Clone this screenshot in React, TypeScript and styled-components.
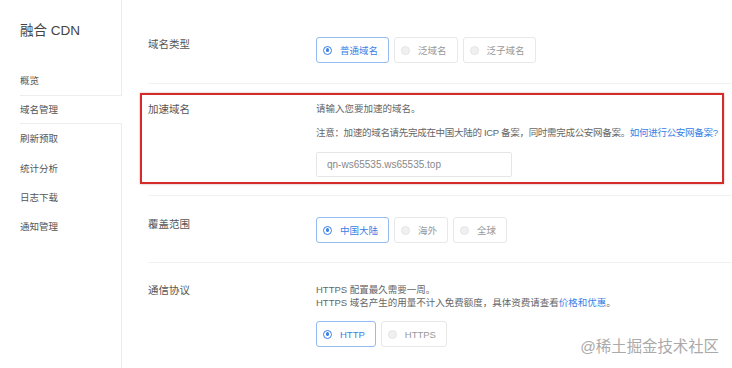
import React from "react";
import styled, { createGlobalStyle } from "styled-components";

const GlobalStyle = createGlobalStyle`
  body {
    margin: 0;
    background: #fff;
    font-family: "Liberation Sans", "Noto Sans CJK SC", sans-serif;
  }
`;

const Page = styled.div`
  position: relative;
  display: flex;
  width: 732px;
  height: 368px;
  overflow: hidden;
  background: #fff;
`;

const Sidebar = styled.aside`
  width: 121px;
  flex-shrink: 0;
  border-right: 1px solid #ececec;
  padding-top: 20px;
`;

const Title = styled.div`
  padding-left: 20px;
  font-size: 13.5px;
  line-height: 22px;
  color: #444;
`;

const Menu = styled.ul`
  list-style: none;
  margin: 24px 0 0;
  padding: 0;
`;

const MenuItem = styled.li<{ $active?: boolean }>`
  position: relative;
  margin-left: 20px;
  margin-right: ${(p) => (p.$active ? "-1px" : "0")};
  height: 29.2px;
  font-size: 9.5px;
  line-height: 27px;
  color: #555;
  background: #fff;
  box-sizing: border-box;
  border-top: 1px solid ${(p) => (p.$active ? "#eeeeee" : "transparent")};
  border-bottom: 1px solid ${(p) => (p.$active ? "#eeeeee" : "transparent")};
`;

const Main = styled.main`
  flex: 1;
  padding-left: 26px;
`;

const Section = styled.section<{ $pt: number; $pb: number; $last?: boolean }>`
  padding: ${(p) => `${p.$pt}px 0 ${p.$pb}px`};
  border-bottom: 1px solid ${(p) => (p.$last ? "transparent" : "#f1f1f1")};
`;

const Row = styled.div`
  display: grid;
  grid-template-columns: 168px 1fr;
  align-items: start;
`;

const Highlight = styled.div`
  margin: 0 8px 0 -8px;
  padding: 7px 0 5px 6px;
  border: 2px solid #d52b2b;
  box-shadow: 0 0 2px rgba(120, 0, 0, 0.35);
`;

const Label = styled.div`
  font-size: 10.5px;
  line-height: 14px;
  color: #555;
`;

const Text = styled.p<{ $lh?: number; $mt?: number; $tight?: boolean }>`
  margin: ${(p) => p.$mt ?? 0}px 0 0;
  font-size: 9.5px;
  line-height: ${(p) => p.$lh ?? 14}px;
  letter-spacing: ${(p) => (p.$tight ? "-0.3px" : "0")};
  color: #666;
  white-space: nowrap;
`;

const Link = styled.a`
  color: #3a80e6;
  text-decoration: none;
`;

const Input = styled.div`
  margin-top: 12px;
  width: 196px;
  height: 25px;
  box-sizing: border-box;
  border: 1px solid #e6e6e6;
  border-radius: 2px;
  padding-left: 10px;
  font-size: 10px;
  line-height: 23px;
  color: #888;
`;

const RadioGroup = styled.div<{ $mt?: number }>`
  display: flex;
  gap: 5px;
  margin-top: ${(p) => p.$mt ?? 0}px;
`;

const RadioButton = styled.div<{ $checked?: boolean }>`
  display: flex;
  align-items: center;
  gap: 8px;
  height: 26px;
  box-sizing: border-box;
  padding: 0 10px 0 6px;
  border: 1px solid ${(p) => (p.$checked ? "#95bcf0" : "#e8e8e8")};
  border-radius: 3px;
  font-size: 9.5px;
  color: ${(p) => (p.$checked ? "#3c80e4" : "#999")};
  background: #fff;
`;

const Dot = styled.span<{ $checked?: boolean }>`
  width: 9px;
  height: 9px;
  box-sizing: border-box;
  border-radius: 50%;
  border: 1px solid ${(p) => (p.$checked ? "#3c80e4" : "#e4e4e4")};
  background: ${(p) => (p.$checked ? "#fff" : "#f0f0f0")};
  display: flex;
  align-items: center;
  justify-content: center;

  &::after {
    content: "";
    width: 3.5px;
    height: 3.5px;
    border-radius: 50%;
    background: ${(p) => (p.$checked ? "#3c80e4" : "transparent")};
  }
`;

const Watermark = styled.div`
  position: absolute;
  right: 13px;
  bottom: 11px;
  font-size: 15.4px;
  line-height: 20px;
  color: #aaa;
`;

function Radios({ items, checked, mt }: { items: string[]; checked: number; mt?: number }) {
  return (
    <RadioGroup $mt={mt}>
      {items.map((it, i) => (
        <RadioButton key={it} $checked={i === checked}>
          <Dot $checked={i === checked} />
          {it}
        </RadioButton>
      ))}
    </RadioGroup>
  );
}

const menu = ["概览", "域名管理", "刷新预取", "统计分析", "日志下载", "通知管理"];

export default function App() {
  return (
    <Page>
      <GlobalStyle />
      <Sidebar>
        <Title>融合 CDN</Title>
        <Menu>
          {menu.map((m) => (
            <MenuItem key={m} $active={m === "域名管理"}>
              {m}
            </MenuItem>
          ))}
        </Menu>
      </Sidebar>
      <Main>
        <Section $pt={37} $pb={20}>
          <Row>
            <Label>域名类型</Label>
            <Radios items={["普通域名", "泛域名", "泛子域名"]} checked={0} />
          </Row>
        </Section>
        <Section $pt={9} $pb={11}>
          <Highlight>
            <Row>
              <Label>加速域名</Label>
              <div>
                <Text>请输入您要加速的域名。</Text>
                <Text $mt={10} $tight>
                  注意：加速的域名请先完成在中国大陆的 ICP 备案，同时需完成公安网备案。
                  <Link>如何进行公安网备案?</Link>
                </Text>
                <Input>qn-ws65535.ws65535.top</Input>
              </div>
            </Row>
          </Highlight>
        </Section>
        <Section $pt={21} $pb={19}>
          <Row>
            <Label>覆盖范围</Label>
            <Radios items={["中国大陆", "海外", "全球"]} checked={0} />
          </Row>
        </Section>
        <Section $pt={20} $pb={20} $last>
          <Row>
            <Label>通信协议</Label>
            <div>
              <Text $lh={13}>HTTPS 配置最久需要一周。</Text>
              <Text $lh={13}>
                HTTPS 域名产生的用量不计入免费额度，具体资费请查看<Link>价格和优惠</Link>。
              </Text>
              <Radios items={["HTTP", "HTTPS"]} checked={0} mt={12} />
            </div>
          </Row>
        </Section>
      </Main>
      <Watermark>@稀土掘金技术社区</Watermark>
    </Page>
  );
}
